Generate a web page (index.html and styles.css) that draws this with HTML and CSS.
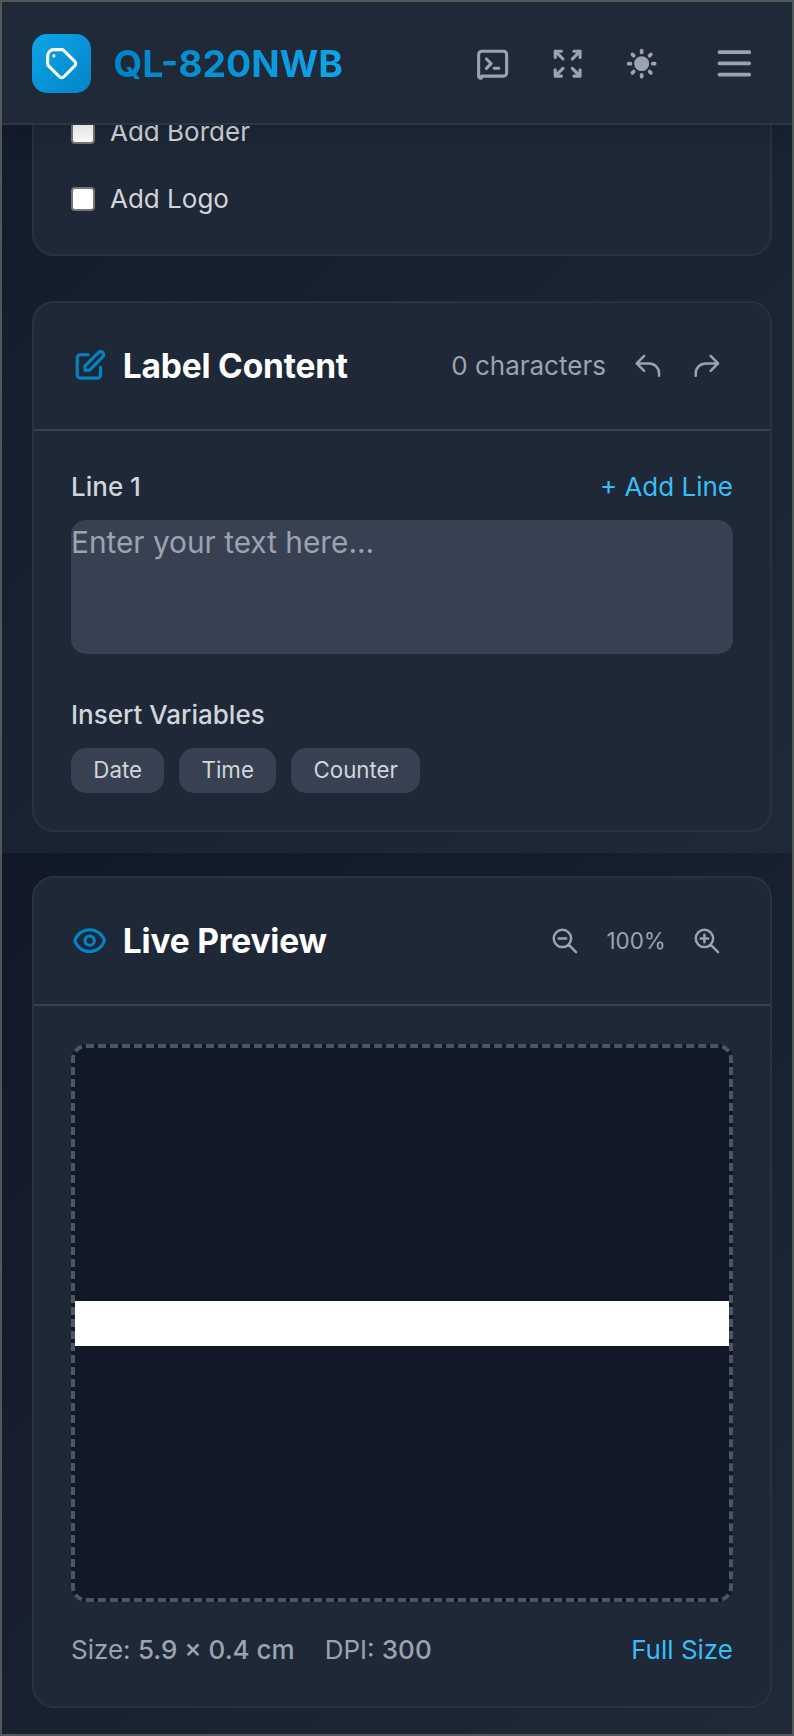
FILE: index.html
```html
<!DOCTYPE html>
<html lang="en">
<head>
<meta charset="utf-8">
<title>QL-820NWB</title>
<link rel="stylesheet" href="styles.css">
</head>
<body>
<div class="app">
  <header class="topbar">
    <div class="brand">
      <div class="logo">
        <svg class="icon" viewBox="0 0 24 24"><path d="M7 7h.01M7 3h5c.512 0 1.024.195 1.414.586l7 7a2 2 0 010 2.828l-7 7a2 2 0 01-2.828 0l-7-7A1.994 1.994 0 013 12V7a4 4 0 014-4z"/></svg>
      </div>
      <h1 class="brand-name">QL-820NWB</h1>
    </div>
    <nav class="tools">
      <svg class="icon" viewBox="0 0 24 24"><path d="M8 9l3 3-3 3m5 0h3M5 20h14a2 2 0 002-2V6a2 2 0 00-2-2H5a2 2 0 00-2 2v13.500a1.500 1.500 0 001.600 1.900L5 20z"/></svg>
      <svg class="icon" viewBox="0 0 24 24"><path d="M4 8V4m0 0h4M4 4l5 5m11-1V4m0 0h-4m4 0l-5 5M4 16v4m0 0h4m-4 0l5-5m11 5l-5-5m5 5v-4m0 4h-4"/></svg>
      <svg class="icon icon-solid" viewBox="0 0 20 20"><path d="M10 2a1 1 0 011 1v1a1 1 0 11-2 0V3a1 1 0 011-1zm4 8a4 4 0 11-8 0 4 4 0 018 0zm-.464 4.95l.707.707a1 1 0 001.414-1.414l-.707-.707a1 1 0 00-1.414 1.414zm2.12-10.607a1 1 0 010 1.414l-.706.707a1 1 0 11-1.414-1.414l.707-.707a1 1 0 011.414 0zM17 11a1 1 0 100-2h-1a1 1 0 100 2h1zm-7 4a1 1 0 011 1v1a1 1 0 11-2 0v-1a1 1 0 011-1zM5.05 6.464A1 1 0 106.465 5.05l-.708-.707a1 1 0 00-1.414 1.414l.707.707zm1.414 8.486l-.707.707a1 1 0 01-1.414-1.414l.707-.707a1 1 0 011.414 1.414zM4 11a1 1 0 100-2H3a1 1 0 000 2h1z"/></svg>
      <svg class="icon icon-menu" viewBox="0 0 24 24"><path d="M4 6h16M4 12h16M4 18h16"/></svg>
    </nav>
  </header>
  <main class="editor">
    <section class="card options">
      <label class="check"><span class="box"></span>Add Border</label>
      <label class="check"><span class="box"></span>Add Logo</label>
    </section>
    <section class="card content">
      <div class="card-head">
        <svg class="icon accent" viewBox="0 0 24 24"><path d="M11 5H6a2 2 0 00-2 2v11a2 2 0 002 2h11a2 2 0 002-2v-5m-1.414-9.414a2 2 0 112.828 2.828L11.828 15H9v-2.828l8.586-8.586z"/></svg>
        <h2>Label Content</h2>
        <span class="count">0 characters</span>
        <svg class="icon icon-sm" viewBox="0 0 24 24"><path d="M3 10h10a8 8 0 018 8v2M3 10l6 6m-6-6l6-6"/></svg>
        <svg class="icon icon-sm" viewBox="0 0 24 24"><path d="M21 10H11a8 8 0 00-8 8v2m18-10l-6 6m6-6l-6-6"/></svg>
      </div>
      <div class="card-body">
        <div class="row"><span class="field-label">Line 1</span><a class="link">+ Add Line</a></div>
        <div class="textarea">Enter your text here...</div>
        <div class="field-label variables">Insert Variables</div>
        <div class="chips"><span class="chip">Date</span><span class="chip">Time</span><span class="chip">Counter</span></div>
      </div>
    </section>
  </main>
  <aside class="preview">
    <section class="card live">
      <div class="card-head">
        <svg class="icon accent" viewBox="0 0 24 24"><path d="M15 12a3 3 0 11-6 0 3 3 0 016 0z"/><path d="M2.458 12C3.732 7.943 7.523 5 12 5c4.478 0 8.268 2.943 9.542 7-1.274 4.057-5.064 7-9.542 7-4.477 0-8.268-2.943-9.542-7z"/></svg>
        <h2>Live Preview</h2>
        <svg class="icon icon-sm" viewBox="0 0 24 24"><path d="M21 21l-6-6m2-5a7 7 0 11-14 0 7 7 0 0114 0zM13 10H7"/></svg>
        <span class="zoom">100%</span>
        <svg class="icon icon-sm" viewBox="0 0 24 24"><path d="M21 21l-6-6m2-5a7 7 0 11-14 0 7 7 0 0114 0zM10 7v3m0 0v3m0-3h3m-3 0H7"/></svg>
      </div>
      <div class="card-body">
        <div class="canvas"><div class="label"></div></div>
        <div class="row meta">
          <span>Size: <b>5.9 × 0.4 cm</b></span>
          <span class="dpi">DPI: <b>300</b></span>
          <a class="link">Full Size</a>
        </div>
      </div>
    </section>
  </aside>
</div>
</body>
</html>
```
FILE: styles.css
```css
* { box-sizing: border-box; }
body {
  margin: 0;
  font-family: Inter, "Liberation Sans", sans-serif;
  color: #d1d5db;
  background: #111827;
}
.app {
  width: 794px;
  height: 1736px;
  border: 2px solid #555658;
  overflow: hidden;
  display: flex;
  flex-direction: column;
}
.icon {
  width: 37.3px;
  height: 37.3px;
  flex: none;
  fill: none;
  stroke: currentColor;
  stroke-width: 2;
  stroke-linecap: round;
  stroke-linejoin: round;
}
.icon-solid { fill: currentColor; stroke: none; }
.icon-sm { width: 29.8px; height: 29.8px; color: #9ca3af; }
.icon-menu { width: 44.7px; height: 44.7px; margin-left: 14.6px; }
.accent { color: #0284c7; }

.topbar {
  position: relative;
  z-index: 1;
  flex: none;
  height: 123px;
  padding: 2px 35px 0 29.5px;
  display: flex;
  justify-content: space-between;
  align-items: center;
  background: #1f2937;
  border-bottom: 2px solid #2b3544;
  box-shadow: 0 2px 30px rgba(0, 0, 0, 0.2);
}
.brand { display: flex; align-items: center; gap: 22px; }
.logo {
  width: 59.7px;
  height: 59.7px;
  border-radius: 15px;
  display: flex;
  align-items: center;
  justify-content: center;
  color: #fff;
  background: linear-gradient(135deg, #0ea5e9, #0284c7);
}
.brand-name {
  margin: 0;
  font-size: 37.3px;
  line-height: 52px;
  font-weight: 700;
  color: transparent;
  background: linear-gradient(90deg, #0284c7, #0ea5e9);
  -webkit-background-clip: text;
  background-clip: text;
}
.tools { display: flex; align-items: center; gap: 37.3px; color: #9ca3af; }

.editor {
  height: 728px;
  flex: none;
  padding: 0 20px 0 30px;
  display: flex;
  flex-direction: column;
  background: linear-gradient(135deg, #131c2b, #1f2937);
}
.preview {
  flex: 1;
  padding: 23px 20px 0 30px;
  background: linear-gradient(135deg, #111827, #1f2937);
}
.card {
  flex: none;
  border: 2px solid #283341;
  border-radius: 22px;
  background: #1e2836;
}
.options {
  height: 151px;
  margin-top: -20px;
  padding: 6px 37px;
  font-size: 26px;
}
.check { display: flex; align-items: center; gap: 15px; height: 37px; margin-bottom: 30px; }
.box {
  width: 24px;
  height: 24px;
  border: 2px solid #767676;
  border-radius: 4px;
  background: #fff;
}
.content { margin-top: 45px; height: 531px; }
.live { height: 832px; }
.card-head {
  height: 128px;
  padding: 0 48px 0 37px;
  display: flex;
  align-items: center;
  border-bottom: 2px solid #374151;
}
.card-head h2 {
  margin: 0 auto 0 14.5px;
  font-size: 33.5px;
  line-height: 52px;
  font-weight: 700;
  letter-spacing: -0.2px;
  color: #fff;
}
.count { font-size: 26px; line-height: 36px; padding-bottom: 1px; color: #9ca3af; margin-right: 27px; }
.count + .icon-sm { margin-right: 29.5px; }
.zoom { width: 112px; padding-bottom: 1px; text-align: center; font-size: 22.4px; color: #9ca3af; }
.card-body { padding: 37px; }
.live .card-body { padding-top: 38px; }
.row {
  display: flex;
  justify-content: space-between;
  align-items: center;
  height: 37px;
  font-size: 26px;
}
.link { color: #38bdf8; }
.field-label { font-size: 26px; line-height: 37px; font-weight: 500; }
.textarea {
  height: 134px;
  margin-top: 15px;
  border-radius: 15px;
  background: #374151;
  color: #9ca3af;
  font-size: 29.8px;
  line-height: 45px;
}
.variables { margin-top: 42px; }
.chips { display: flex; gap: 15px; margin-top: 15px; }
.chip {
  height: 45px;
  padding: 0 22.3px;
  border-radius: 15px;
  background: #374151;
  font-size: 22.3px;
  line-height: 44px;
}
.canvas {
  height: 558px;
  border: 4px dashed #4b5563;
  border-radius: 15px;
  background: #111827;
  display: flex;
  align-items: center;
}
.label { width: 100%; height: 45px; background: #fff; }
.meta { margin-top: 29px; color: #9ca3af; }
.meta b { font-weight: 500; }
.dpi { margin: 0 auto 0 30px; }
```
